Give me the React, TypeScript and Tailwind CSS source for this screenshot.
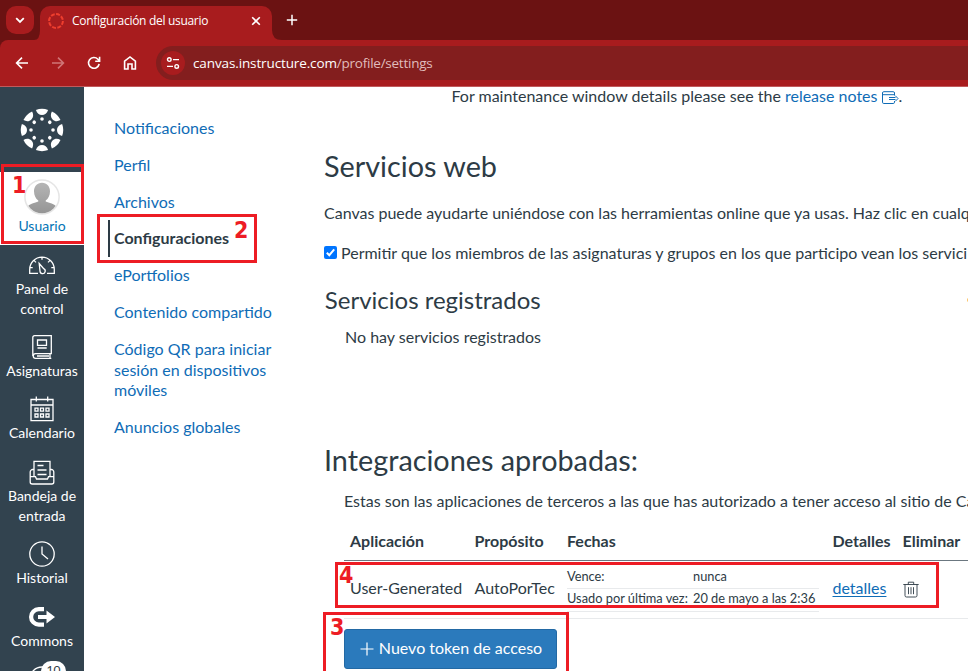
import type { ReactNode } from "react";

const spokes = [0, 45, 90, 135, 180, 225, 270, 315];

function CanvasLogo() {
  return (
    <svg width="44" height="44" viewBox="-22 -22 44 44" fill="#fff" className="block">
      {spokes.map((a) => (
        <g key={a} transform={`rotate(${a})`}>
          <path d="M-6.1 -20.1 Q0 -22.4 6.1 -20.1 C5 -16.6 2.8 -15 0 -15 C-2.8 -15 -5 -16.6 -6.1 -20.1Z" />
          <circle cx="0" cy="-11" r="1.8" />
        </g>
      ))}
    </svg>
  );
}

function Line({ size = 26, children }: { size?: number; children: ReactNode }) {
  return (
    <svg width={size} height={size} viewBox="0 0 26 26" fill="none" stroke="#fff" strokeWidth="1.3" className="block shrink-0">
      {children}
    </svg>
  );
}

function GlobalItem({ icon, lines, className }: { icon: ReactNode; lines: string[]; className: string }) {
  return (
    <div className={`flex flex-col items-center text-[14px] leading-[20px] text-white ${className}`}>
      {icon}
      {lines.map((l) => (
        <div key={l} className="h-5 whitespace-nowrap">{l}</div>
      ))}
    </div>
  );
}

function Browser() {
  return (
    <header className="h-[87px] shrink-0 bg-[#6b1212] font-['Open_Sans','Noto_Sans',sans-serif] text-white">
      <div className="flex h-10">
        <div className="ml-[6px] mt-[6px] flex h-7 w-7 items-center justify-center rounded-[10px] bg-[#a81c1e]">
          <svg width="10" height="10" viewBox="0 0 10 10" fill="none" stroke="#fff" strokeWidth="1.8"><path d="M1.2 3.2 5 7l3.8-3.8" /></svg>
        </div>
        <svg width="6" height="40" viewBox="0 0 6 40" className="block"><path d="M6 40V30Q6 40 0 40Z" fill="#a81c1e" /></svg>
        <div className="mt-[6px] flex h-[34px] w-[232px] items-center rounded-t-[10px] bg-[#a81c1e] pb-[5px]">
          <svg width="16" height="16" viewBox="0 0 16 16" fill="none" stroke="#ee3e2e" strokeWidth="2" strokeDasharray="4 1.400" className="ml-2"><circle cx="8" cy="8" r="6.900" /></svg>
          <span className="ml-2 w-[168px] whitespace-nowrap text-[12px] tracking-[-0.3px]">Configuración del usuario</span>
          <svg width="10" height="10" viewBox="0 0 10 10" stroke="#fff" strokeWidth="1.6" className="ml-[11px]"><path d="m1.2 1.2 7.6 7.6M8.8 1.2 1.2 8.8" /></svg>
        </div>
        <svg width="10" height="40" viewBox="0 0 10 40" className="block"><path d="M0 40V30Q0 40 10 40Z" fill="#a81c1e" /></svg>
        <svg width="12" height="12" viewBox="0 0 12 12" stroke="#fff" strokeWidth="1.5" className="ml-1 mt-[14px]"><path d="M6 .8v10.4M.8 6h10.4" /></svg>
      </div>
      <div className="flex h-[47px] items-center rounded-tl-[8px] border-b border-[#c05a5c] bg-[#a81c1e]">
        <svg width="14" height="14" viewBox="0 0 14 14" fill="none" stroke="#fff" strokeWidth="1.6" className="ml-[15px]"><path d="M13 7H2M7 1.6 1.6 7 7 12.4" /></svg>
        <svg width="14" height="14" viewBox="0 0 14 14" fill="none" stroke="#d07677" strokeWidth="1.6" className="ml-[22px]"><path d="M1 7h11M7 1.6 12.4 7 7 12.4" /></svg>
        <svg width="14" height="14" viewBox="0 0 14 14" fill="none" stroke="#fff" strokeWidth="1.6" className="ml-[22px]"><path d="M12.2 8A5.4 5.4 0 1 1 10.9 3.2L12.6 5M12.6.8V5.2H8.2" /></svg>
        <svg width="14" height="16" viewBox="0 0 14 16" fill="none" stroke="#fff" strokeWidth="1.6" className="ml-[22px]"><path d="M1.6 6.2 7 1.9l5.4 4.3V14H9V9H5v5H1.6Z" /></svg>
        <div className="ml-[19px] flex h-[34px] flex-1 items-center rounded-l-full bg-[#831e1e]">
          <div className="ml-[5px] flex h-6 w-6 items-center justify-center rounded-full bg-[#a81c1e]">
            <svg width="14" height="14" viewBox="0 0 14 14" fill="none" stroke="#fff" strokeWidth="1.4"><circle cx="3.3" cy="3.6" r="1.8" /><path d="M7 3.6h6M1 10.4h6" /><circle cx="10.7" cy="10.4" r="1.8" /></svg>
          </div>
          <div className="ml-2 whitespace-nowrap text-[13.5px] tracking-[-0.12px]">canvas.instructure.com<span className="tracking-[-0.25px] text-[#e0bcbc]">/profile/settings</span></div>
        </div>
      </div>
    </header>
  );
}

function Sidebar() {
  return (
    <nav className="relative h-[584px] w-[84px] shrink-0 overflow-hidden bg-[#32434f]">
      <div className="flex h-[85px] justify-center pt-[21px]"><CanvasLogo /></div>
      <div className="flex h-[73px] flex-col items-center bg-white pt-[7px]">
        <svg width="36" height="36" viewBox="0 0 36 36" className="block">
          <defs>
            <linearGradient id="person" x1="0" y1="0" x2="0" y2="1"><stop offset="0" stopColor="#b5b5b5" /><stop offset="1" stopColor="#939393" /></linearGradient>
            <clipPath id="disc"><circle cx="18" cy="18" r="16.2" /></clipPath>
          </defs>
          <circle cx="18" cy="18" r="17.1" fill="#fff" stroke="#e5e5e5" strokeWidth="1.500" />
          <path clipPath="url(#disc)" fill="url(#person)" d="M18 3.700c5 0 8 3.700 8 8.500 0 4.300-1.800 7.500-4.300 9.200v1c3.300 1.200 9 2.300 11.300 5.600V36H3v-8c2.300-3.300 8-4.400 11.300-5.600v-1c-2.500-1.700-4.300-4.900-4.300-9.200 0-4.800 3-8.500 8-8.500Z" />
        </svg>
        <div className="pt-px text-[14px] leading-[20px] text-[#0374b5]">Usuario</div>
      </div>
      <GlobalItem className="mt-[7px]" lines={["Panel de", "control"]} icon={
        <div className="h-[27px]"><Line><path d="M9 21.300H.7V17.500a12.300 12.300 0 0 1 24.600 0v3.800H18M13 5.200v2.600M5.200 8.600 7 10.400M20.800 8.600 19 10.400M.7 15.700h3M22.300 15.700h3M10.200 11.500l4.500 5.200a2.600 2.600 0 1 1-3.700 2.300Z" /></Line></div>} />
      <GlobalItem className="mt-[15px]" lines={["Asignaturas"]} icon={
        <div className="h-[27px]"><Line><path d="M5.500 1.700h16.800v18H6.500c-3 0-3 4.600 0 4.600h15.800M5.500 1.700c-1 0-1.700.8-1.700 1.800v18.500M21 19.700v4.600M8 22h12M8.500 6h9v5.300h-9ZM8.500 14h9.200" /></Line></div>} />
      <GlobalItem className="mt-[15px]" lines={["Calendario"]} icon={
        <div className="h-[27px]"><Line><path d="M2 3.500h22v21.200H2ZM2 9h22M7.300.5v5M18.700.5v5M6 12.200h3v3H6zM11.500 12.200h3v3h-3zM17 12.200h3v3h-3zM6 18h3v3H6zM11.500 18h3v3h-3zM17 18h3v3h-3z" /></Line></div>} />
      <GlobalItem className="mt-[17px]" lines={["Bandeja de", "entrada"]} icon={
        <Line><path d="M5 16.500V1.300h16v15.200M5 9.500H4a2.500 2.500 0 0 0-2.800 2.500v10a2 2 0 0 0 2 2h19.600a2 2 0 0 0 2-2V12A2.500 2.500 0 0 0 22 9.500h-1M1.200 16.700h5.300l1 2.300h11l1-2.300h5.300M8.500 5.500h6M8.500 10h9M8.500 14.500h9" /></Line>} />
      <GlobalItem className="mt-[15px]" lines={["Historial"]} icon={
        <div className="h-[27px]"><Line><circle cx="13" cy="13" r="12.200" /><path d="M13 5.500V13l6 5" /></Line></div>} />
      <GlobalItem className="mt-[16px]" lines={["Commons"]} icon={
        <div className="h-[27px]"><Line><path d="M15 5.200H9.800a7.700 7.700 0 0 0 0 15.400H15" strokeWidth="4.200" /><path d="M9 11h8.500V6.500L26 13l-8.500 6.500v-4.500H9Z" fill="#fff" stroke="none" /></Line></div>} />
      <div className="mt-[14px] flex justify-center"><Line><circle cx="13" cy="14" r="12" /></Line></div>
      <div className="absolute left-[41px] top-[574px] h-5 w-[25px] rounded-full bg-white text-center text-[12px] leading-[18px] text-[#2d3b45]">10</div>
    </nav>
  );
}

const links = ["Notificaciones", "Perfil", "Archivos", "Configuraciones", "ePortfolios", "Contenido compartido", "Código QR para iniciar sesión en dispositivos móviles", "Anuncios globales"];

function ProfileMenu() {
  return (
    <aside className="w-[240px] shrink-0 pl-6 pt-[23px] text-[16px] leading-[20.8px] text-[#0f6cb6]">
      {links.map((l) => (
        <div key={l} className={l === "Configuraciones" ? "w-[190px] border-l-2 border-[#2d3b45] py-2 pl-1 font-bold text-[#2d3b45]" : "w-[190px] py-2 pl-[6px]"}>
          {l}
        </div>
      ))}
    </aside>
  );
}

function Trash() {
  return (
    <svg width="16" height="17" viewBox="0 0 16 17" fill="none" stroke="#2d3b45" strokeWidth="0.9" className="block"><path d="M.3 3.500h15.400M5.300 3.500V1.200h5.400v2.300M2 3.500V14.500a1.500 1.500 0 0 0 1.500 1.500h9a1.500 1.500 0 0 0 1.500-1.500V3.500M5.500 6.200v7M8 6.200v7M10.500 6.200v7" /></svg>
  );
}

function Main() {
  return (
    <main className="w-[644px] shrink-0 overflow-hidden whitespace-nowrap text-[16px] leading-6 text-[#2d3b45]">
      <div className="flex h-[42px] items-start pl-[127.5px]">
        <p className="-mt-[3px] flex items-center">For maintenance window details please see the&nbsp;<span className="text-[#0f6cb6]">release notes</span>
          <svg width="17" height="14" viewBox="0 0 17 14" fill="none" stroke="#0f6cb6" className="-mr-px ml-[5px] mt-[3px]"><path d="M12.500 4.500V2A1.300 1.300 0 0 0 11.200.7H1.800A1.300 1.300 0 0 0 .5 2v9.200a1.300 1.300 0 0 0 1.300 1.300h9.400a1.300 1.300 0 0 0 1.300-1.300V10M.5 3.700h12M7 6.500h6.500M7 8.500h6.500M13.300 4.700l2.700 2.800-2.700 2.800" /></svg>.
        </p>
      </div>
      <h2 className="mt-[17px] h-10 text-[28.8px] leading-10">Servicios web</h2>
      <p className="mt-[15px]">Canvas puede ayudarte uniéndose con las herramientas online que ya usas. Haz clic en cualq</p>
      <label className="mt-4 flex items-center">
        <svg width="13" height="13" viewBox="0 0 13 13" className="-mt-[2px] mr-1 shrink-0"><rect width="13" height="13" rx="2" fill="#0075ff" /><path d="m2.800 6.700 2.500 2.500 4.900-5.800" fill="none" stroke="#fff" strokeWidth="2" /></svg>
        Permitir que los miembros de las asignaturas y grupos en los que participo vean los servici
      </label>
      <div className="mt-[19px] flex h-8 items-center justify-between">
        <h3 className="pl-[0.8px] text-[24px] leading-8">Servicios registrados</h3>
        <span className="-mr-[5px] h-[6px] w-[6px] rounded-full border border-[#fbbc58]" />
      </div>
      <p className="mt-[9px] pl-[21px]">No hay servicios registrados</p>
      <h2 className="mt-[91px] h-10 text-[28.800px] leading-10">Integraciones aprobadas:</h2>
      <p className="mt-[9px] pl-5">Estas son las aplicaciones de terceros a las que has autorizado a tener acceso al sitio de Ca</p>
      <div className="ml-5">
        <div className="mt-[5px] flex h-[43px] items-center border-b border-[#6b7780] pl-[6px] pt-[3px] font-bold">
          <div className="w-[124.5px]">Aplicación</div><div className="w-[92.5px]">Propósito</div><div className="w-[265.5px]">Fechas</div><div className="w-[70px]">Detalles</div><div>Eliminar</div>
        </div>
        <div className="flex h-[58px] border-b border-[#e8eaec] pl-[6px]">
          <div className="mt-[15px] w-[124.5px]">User-Generated</div>
          <div className="mt-[15px] w-[92.5px]">AutoPorTec</div>
          <div className="mr-[13.5px] mt-[6px] w-[252px] text-[12.8px] leading-[18px]">
            <div className="flex h-[22px] border-b border-[#e8eaec]"><div className="w-[126px]">Vence:</div><div>nunca</div></div>
            <div className="flex h-[23px] border-b border-[#e8eaec]"><div className="w-[126px]">Usado por última vez:</div><div>20 de mayo a las 2:36</div></div>
          </div>
          <div className="mt-[15px] w-[70px] text-[#0f6cb6] underline underline-offset-2">detalles</div>
          <div className="mt-5"><Trash /></div>
        </div>
      </div>
      <button className="ml-5 mt-[10px] flex h-10 w-[213px] items-center justify-center rounded-[3px] border border-[#2369a4] bg-[#2b7abc] pb-[2px] pl-px text-white">
        <svg width="14" height="14" viewBox="0 0 14 14" stroke="#fff" strokeWidth="1.200" className="mr-[5px] mt-[2px]"><path d="M7 .5v13M.5 7h13" /></svg>Nuevo token de acceso
      </button>
    </main>
  );
}

export default function App() {
  return (
    <div className="relative flex h-[671px] w-[968px] flex-col overflow-hidden bg-white font-[Lato,sans-serif]">
      <Browser />
      <div className="flex h-[584px]">
        <Sidebar />
        <ProfileMenu />
        <Main />
      </div>
      <div className="absolute left-px top-[164px] h-[80px] w-[83px] border-[3px] border-[#ed1c24]" />
      <div className="absolute left-[97px] top-[214px] h-[49px] w-[160px] border-[3px] border-[#ed1c24]" />
      <div className="absolute left-[335px] top-[562px] h-[46px] w-[604px] border-[3px] border-[#ed1c24]" />
      <div className="absolute left-[323px] top-[612px] h-[80px] w-[246px] border-[3px] border-[#ed1c24]" />
      <div className="font-['DejaVu_Sans_Condensed','DejaVu_Sans',sans-serif] text-[23px] font-bold leading-6 text-[#ed1c24] [font-stretch:condensed]">
        <span className="absolute left-[12px] top-[173px]">1</span>
        <span className="absolute left-[234px] top-[218px]">2</span>
        <span className="absolute left-[330px] top-[615px]">3</span>
        <span className="absolute left-[339px] top-[563px]">4</span>
      </div>
    </div>
  );
}
